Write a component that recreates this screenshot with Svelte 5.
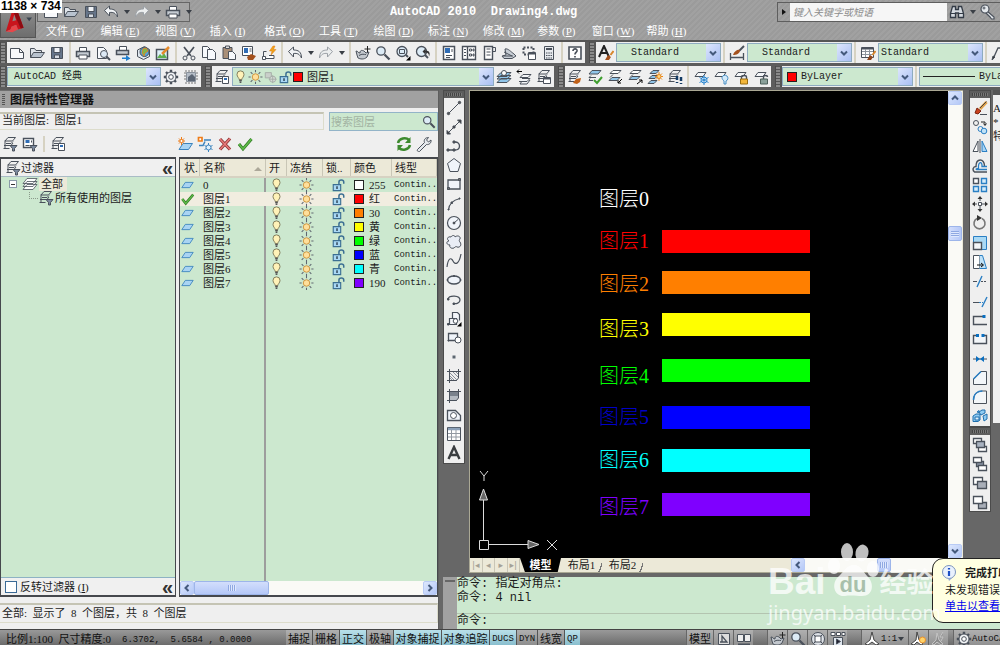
<script>
  // 16x16 图标
  const stack = '<path d="M6 1.500h7.500l-3 3.500H3zM4 7.500h5l2-2M2 9.500h7l2-2.500M1.500 12.500h6M3 4.500v8" />';
  const sheet = (x, y, w = 7, h = 9) => `<path fill="#f7f9fc" d="M${x} ${y}h${w - 3}l3 3v${h - 3}h-${w}z" />`;
  const slab = '<path d="M5 3.500h8l-3 4H2z" fill="#f4f6f8" />';
  const gearPath = '<path d="M8 .8v14.400M.8 8h14.400M3 3l10 10M13 3L3 13" stroke-width="2.400" /><circle cx="8" cy="8" r="5" fill="#f2f4f6" /><circle cx="8" cy="8" r="2.300" fill="#fff" />';
  const funnel = '<path d="M8 9.500h7l-2.500 3V15h-2v-2.500z" fill="#7d8ba0" />';
  const frame = '<path d="M3.500 1v14M1 3.500h14M1 12.500h9M12.500 1v9L10 13" />';

  const icons = {
    new: '<path d="M1.500 3.500h9l4 4v6h-13z" fill="#f8f9fb" /><path d="M10.500 3.500v4h4" />',
    open: '<path d="M1.500 12.500v-9h4l1.500 2h5.500v2" fill="#dfe4ea" /><path d="M1.500 12.500l3-5h11l-3.500 5z" fill="#b9c3cf" />',
    save: '<path d="M2.500 2.500h11v11h-11z" fill="#66758a" /><path d="M5 2.500h6v5H5z" fill="#f0f3f7" /><path d="M5.500 10h5v3.500h-5z" fill="#d8dde4" />',
    print: '<path d="M4.500 7V2.500h7V7" fill="#fff" /><path d="M1.500 6.500h13v5h-13z" fill="#c5cbd2" stroke-width="1.500" /><path d="M4 10h8v4H4z" fill="#fff" />',
    preview: sheet(2.5, 2.5, 9, 11) + '<circle cx="9" cy="9" r="3.500" fill="#dce9f5" /><path d="M11.500 11.500L15 15" stroke-width="2" />',
    publish: '<path d="M4.500 6V1.500h7V6" fill="#fff" /><path d="M1.500 5.500h12v4h-12z" fill="#c5cbd2" stroke-width="1.500" /><path d="M7 12.500h4V10l4.500 3.500-4.500 2.500v-2H7z" fill="#1f7fd0" stroke="none" />',
    globe: '<path d="M2.500 5l7-3.500 5 3v7l-6 3-6-3z" fill="#dfe7ef" /><circle cx="9.500" cy="7" r="4.500" fill="#54a6dc" /><path d="M8 4l3-1 2 3-3 2-1 3-2-3z" fill="#7dba4b" stroke="#d8862c" />',
    edit: '<path d="M1.500 4.500h11v10h-11z" fill="#dff0fa" stroke-width="1.500" /><path d="M2 13l3-4 2 2 2-3 3 5z" fill="#5fae4e" stroke="none" /><path d="M14 2L7 9" stroke="#e58a2a" stroke-width="2.500" />',
    cut: '<path d="M3 2l7 9M13 2L6 11" stroke-width="1.700" /><circle cx="4" cy="13" r="2" /><circle cx="12" cy="13" r="2" />',
    copy: sheet(1.5, 1.5, 8, 11) + sheet(6.5, 4.5, 8, 10),
    paste: '<path d="M2 2.500h9v11H2z" fill="#a98f78" /><path d="M4.500 1h4v2.500h-4z" fill="#ddd" />' + sheet(7.5, 6.5, 7, 8),
    match: '<path d="M1.500 1.500h10v9h-10z" fill="#fff" /><path d="M3 3h4v5H3z" fill="#2f6cb5" stroke="none" /><path d="M8.500 4h2M8.500 6h2" /><path d="M6 12l4-3 5 2-3 4H7z" fill="#a4501c" stroke="none" />',
    block: '<path d="M5.500 6.500h-3v5M9 11.500h3" /><path d="M1.500 11.500h3v3h-3zM8 10.500h5v3H4.500" fill="#fff" /><path d="M12 1L8.500 6H11l-1 4 5-5.500h-2.500L14 1z" fill="#f0a21c" stroke="#e07d10" stroke-width=".5" />',
    undo: '<path d="M1.500 6.500L6.500 2v3c5 0 8 2 8 8-2-4-4-5-8-4.500V12z" fill="#f2f4f6" />',
    redo: '<path d="M14.500 6.500L9.500 2v3c-5 0-8 2-8 8 2-4 4-5 8-4.500V12z" fill="#eceeef" stroke="#9ba0a6" />',
    pan: '<path d="M1 6c2 0 2 2 4 2 0-3 2-3 4-2l2 2 3-1-2 5c-3 3-7 2-9 1l-1-3z" fill="#c2c7cd" /><path d="M4 10.500c3-2 5-1 7-1" /><path d="M12.500 1v6M9.500 4h6" stroke="#222" />',
    zoom: '<circle cx="6" cy="6" r="4.200" fill="#dcebf6" stroke-width="1.300" /><path d="M9.500 9.500L14.500 14.500" stroke-width="2.300" />',
    zoomwin: '<circle cx="7" cy="6.500" r="5" fill="#dcebf6" stroke-width="1.300" /><path d="M4.500 4.500h5v4h-5z" /><path d="M11 10l2 2" stroke-width="2" /><path d="M15.500 11v4.500H11z" fill="#000" stroke="none" />',
    zoomprev: '<circle cx="6.500" cy="6.500" r="5" fill="#dcebf6" stroke-width="1.300" /><path d="M10 10l3 3" stroke-width="2" /><path d="M7.500 6.500l3-3v2c4 0 5 3 3.500 6 0-3-1-4-3.500-4v2z" fill="#333" stroke="none" />',
    props: '<path d="M2.500 1.500h11v13h-11z" fill="#fff" stroke-width="1.500" /><path d="M4 3h5v5H4z" fill="#2f6cb5" stroke="none" /><path d="M11 4v3M5 10.500h6M5 12.500h4" />',
    design: '<path d="M1.500 1.500h13v13h-13zM6.500 2v12" fill="#fff" stroke-width="1.400" /><path d="M3 4.500h2M3 7.500h2M3 10.500h2M8.500 4h2v2h-2zM12 4h1v2h-1zM8.500 9h2v2h-2zM12 9h1v2h-1z" />',
    palette: '<path d="M3.500 1.500h8v13h-8z" fill="#fff" stroke-width="1.400" /><path d="M11.500 2.500h3v4h-3M5.500 4h4M5.500 7h4M5.500 10h4" />',
    markup: '<path d="M4 4c3-1 6 3 9 5l2 2-4 2.500H3L1 11l4-1z" fill="#c8ced5" /><path d="M3 7l8 4M2 11h10" />',
    sheets: '<path d="M2.500 2.500h10v7h-10z" stroke-dasharray="2 1.500" stroke-width="2" /><path d="M7.500 7.500h7v7h-7z" fill="#fff" /><path d="M8 8.500h6" stroke-width="2" />',
    calc: '<path d="M3.500 1.500h9v13h-9z" fill="#e7eaee" /><path d="M5 4h6" stroke-width="2" /><path d="M5 8h6M5 10.500h6M5 13h6" stroke-dasharray="1.500 .8" />',
    help: '<path d="M2 2h12v12H2z" fill="#fff" stroke-width="1.600" /><path d="M6 6c0-3 4.500-2.500 4 0-.5 1.500-2 1.500-2 3.500M8 11v1.500" stroke-width="1.700" />',
    textstyle: '<path d="M1 12L6 1l5 11M3 8h6" stroke="#222" stroke-width="2" /><path d="M15.500 6l-3 4" stroke="#d8862c" stroke-width="2" /><path d="M7 15l3-5 3 2-2 3z" fill="#a4501c" stroke="none" />',
    dimstyle: '<path d="M1.500 8v7M14.500 8v7M2 12.500h12" stroke-width="1.300" /><path d="M15 1l-5 5" stroke-width="2" /><path d="M4 10c1-4 5-6 7-5 0 4-4 5-7 5z" fill="#a4501c" stroke="none" />',
    tablestyle: '<path d="M1.500 2.500h12v10h-12z" fill="#fff" /><path d="M2 3.500h11" stroke-width="2" /><path d="M2 6.500h11M2 9.500h11M5.500 4v8M9.500 4v8" stroke="#8d949c" /><path d="M15.500 6l-3 4" stroke="#d8862c" stroke-width="2" /><path d="M7 15l3-5 3 2-2 3z" fill="#8e431a" stroke="none" />',
    leader: '<path d="M2 14L7 3h6" stroke-width="1.300" /><path d="M1 15l1-4 2 1z" fill="#333" /><path d="M9 12l4-6 2 3-3 5z" fill="#a4501c" stroke="none" />',
    gear: gearPath,
    wsave: '<path d="M3.500 3.500h9v9h-9z" fill="#b4bcc6" stroke="#8a929c" /><path d="M3 1v2M6 1v2M9 1v2M12 1v2M3 13v2M6 13v2M9 13v2M12 13v2M1 4h2M1 7h2M1 10h2M13 4h2M13 7h2M13 10h2" stroke="#777" /><path d="M5 12V8l4-3 3 3v4z" fill="#5b6573" stroke="none" />',
    layers: stack + '<path d="M8.500 7.500h6v7h-6z" fill="#fff" /><path d="M10 9h3v2h-3z" fill="#2f6cb5" stroke="none" />',
    layercur: '<path d="M5 6.500h10l-4 3.500H1zM5 9.500h10l-4 4H1zM5 3.500h10l-4 4H1z" fill="#8fc4e8" /><circle cx="8" cy="4" r="2.500" fill="#fff" />',
    layerprev: '<path d="M7 5.500h8l-3 3H4zM6 9.500h8l-3 3H3M6 12l-2 3h7l3-4" fill="#f4f6f8" /><path d="M1 2.500h5M3 .5l-2 2 2 2" stroke="#000" />',
    layerstate: stack + '<path d="M7.500 8.500h7v6h-7z" fill="#fff" /><path d="M8 9.500h6" stroke-width="2" />',
    lbrush: stack + '<path d="M6 14l3-4 5-1-1 4-3 2z" fill="#c06018" stroke="none" />',
    lcheck: '<path d="M5 1.500h9l-3 3.500H2z" fill="#8fc4e8" /><path d="M4 6.500L2 8.500h7M3 9.500l-1 2h4" /><path d="M7 11l3 3 5-6" stroke="#3f9f2f" stroke-width="2" />',
    lblue: '<path d="M6 1.500h8l-3 3H3zM6 5.500L3 8.500" fill="#fff" /><path d="M5 8.500h8l-3 3H2z" fill="#8fc4e8" /><path d="M15 10l-4 4m0-3v3h3" stroke="#000" />',
    lblue2: '<path d="M6 1.500h8l-3 3H3zM6 5.500L3 8.500" fill="#fff" /><path d="M5 7.500h8l-3 3H2z" fill="#8fc4e8" /><path d="M10 15l5-4m-3 0h3v3" stroke="#000" />',
    lsun: '<path d="M6 1.500h6l-3 3H3zM5 6.500h6l-3 3H2zM4 11.500h6l-3 3H1z" fill="#8fc4e8" /><path d="M12 3v9M8 7.500h8M9 4.500l6 6M15 4.500l-6 6" stroke="#e88a20" /><circle cx="12" cy="7.500" r="2" fill="#ffd680" stroke="#e88a20" />',
    lwalk: stack + '<path d="M10 7v4M14 8v4M10 13v1M14 14v1" stroke="#123a63" stroke-width="2.500" />',
    lfreeze: slab + '<circle cx="11" cy="11" r="3" stroke="#2a86d0" fill="#fff" /><path d="M11 6v10M6.500 8.500l9 5M15.500 8.500l-9 5" stroke="#2a86d0" />',
    loff: slab + '<path d="M9 8.500a3 3 0 1 1 4 3.500v3h-2v-3c-1-1-2-2-2-3.500z" fill="#d3eafa" stroke="#4a90c4" />',
    llock: slab + '<path d="M8.500 10V8c0-2 5-2 5 0v2" stroke-width="1.400" /><path d="M7.500 10h7v5h-7z" fill="#f2b63a" stroke="#9b6e12" />',
    lunlock: slab + '<path d="M10.500 10V8c0-2 4-2 4 0" stroke-width="1.400" /><path d="M7.500 10h7v5h-7z" fill="#8aa09a" stroke="#4f625c" />',
    bulb: '<path d="M6.500 11c0-2-2.500-3-2.500-6a4 4 0 0 1 8 0c0 3-2.500 4-2.500 6z" fill="#fff2b8" stroke="#77704f" /><path d="M6.500 12h3M7 14h2" stroke="#555" stroke-width="1.600" />',
    sun: '<path d="M8 0v2.500M8 13.500V16M0 8h2.500M13.500 8H16M2.500 2.500l2 2M11.500 11.500l2 2M13.500 2.500l-2 2M4.500 11.500l-2 2" stroke="#5f6670" stroke-width="1.200" /><circle cx="8" cy="8" r="3.700" fill="#ffdf9a" stroke="#c98d35" />',
    vpfreeze: '<path d="M2 3h7v6H2z" fill="#c9cfca" stroke="#a4aaa5" /><circle cx="10.500" cy="10.500" r="3.500" fill="#d5dbd6" stroke="#a4aaa5" /><path d="M10.500 6v9M6 10.500h9" stroke="#a4aaa5" />',
    unlock: '<path d="M8.500 8V4.500c0-3 5.500-3 5.500 0v2" stroke="#3c6f93" stroke-width="1.700" /><path d="M2 7.500h8.500v7H2z" fill="#a9d8f5" stroke="#3c6f93" stroke-width="1.300" /><path d="M6.300 9.500v3" stroke="#234" stroke-width="1.500" />',
    sheet: '<path d="M5.500 5h9l-4 6h-9z" fill="#a9d4f3" stroke="#3b83bd" />',
    tick: '<path d="M2 8l4 5 8.500-10" stroke="#2f7a22" stroke-width="3" /><path d="M2 8l4 5 8.500-10" stroke="#5fbb4a" stroke-width="1.500" />',
    cross: '<path d="M3 3l10 10.500M13 2.500L3 13.500" stroke="#8f3333" stroke-width="3.200" /><path d="M3 3l10 10.500M13 2.500L3 13.500" stroke="#e87b7b" stroke-width="1.500" />',
    newlayer: '<path d="M6 7.500h9.500l-4 6H2z" fill="#a9d4f3" stroke="#3b83bd" /><path d="M4.500 1v8M1 5h7M2 2.500l5 5M7 2.500l-5 5" stroke="#ee7d1a" /><circle cx="4.500" cy="5" r="1.600" fill="#fff" stroke="#ee7d1a" />',
    newvp: '<path d="M1.500 1.500h3.500v3.500H1.500z" fill="#fff" stroke="#ee7d1a" stroke-width="1.700" /><path d="M7 4h7M8 5.500L6 9.500H2" stroke="#3b83bd" stroke-width="1.500" /><path d="M11.500 7v9M7.500 9.500l8 4M15.500 9.500l-8 4" stroke="#3b83bd" /><circle cx="11.500" cy="11.500" r="2.500" fill="#dff0fc" stroke="#3b83bd" />',
    refresh: '<path d="M2 7c1-5 8-6 11-3M14 9c-1 5-8 6-11 3" stroke="#3d8a2e" stroke-width="2.500" /><path d="M14.500 1v6H9zM1.500 15V9H7z" fill="#3d8a2e" stroke="none" />',
    wrench: '<path d="M1.500 13.500l7-7c-1-3 1-5 4-5L10.500 4l2 2 2.500-2c.5 3-2 5-4.500 4.500l-7 7c-1 1-3-1-2-2z" fill="#e5e8ec" />',
    filter: stack + funnel,
    pfilter: '<path d="M1.500 2.500h10v9h-10z" fill="#fff" stroke-width="1.400" /><path d="M3.500 4h4v3h-4z" fill="#2f6cb5" stroke="none" /><path d="M3.500 9.500h4M9.500 4.500v2" />' + funnel,
    leaves: '<path d="M5 8.500h10l-4 5H1zM5 5.500h10l-4 5H1zM5 2.500h10l-4 5H1z" fill="#fff" stroke-width=".8" />',
    binocs: '<path d="M3.500 2.500h3v3h3v-3h3l2 7v4H9.500V9h-3v4.500h-5v-4z" fill="#d5dae0" stroke="#333b46" stroke-width="1.300" /><path d="M2 9.500h4M10 9.500h4" stroke="#333b46" />',
    key: '<path d="M7 7l7 6v2h-2.500L10 13l-1-1-4-4" fill="#e4e8ec" stroke-width="1.200" /><circle cx="5" cy="5" r="4" fill="#e4e8ec" stroke-width="1.200" /><circle cx="4" cy="4" r="1" />',
    // 绘图
    line: '<path d="M2.500 13.500l11-11" /><circle cx="2.500" cy="13.500" r="1.200" fill="#555" /><circle cx="13.500" cy="2.500" r="1.200" fill="#555" />',
    xline: '<path d="M2 14L14 2" /><path d="M1 11.500v3.500h3.500zM11.500 1H15v3.500zM7 7h2v2H7z" fill="#333" />',
    pline: '<path d="M2 12h7c6 0 6-8 0-8" stroke-width="1.300" /><path d="M1 11h2v2H1zM7 11h2v2H7zM7 3h2v2H7z" fill="#555" />',
    polygon: '<path d="M8 1.500l6.500 5-2.500 8H4l-2.500-8z" fill="#f0f4fa" />',
    rect: '<path d="M2 4h12v9H2z" fill="#f0f4fa" stroke-width="1.300" /><path d="M12.500 2.500h2v2h-2zM1.500 11.500h2v2h-2z" fill="#777" />',
    arc: '<path d="M2.500 14C3 8 7 4 14 2.500" stroke-width="1.200" /><path d="M2 13h1v1H2zM5 6h1.500v1.500H5zM13 2h1v1h-1z" fill="#444" />',
    circle: '<circle cx="8" cy="8" r="6.500" fill="#f0f4fa" stroke-width="1.200" /><path d="M8 8l4-3.500" /><circle cx="8" cy="8" r="1" fill="#333" />',
    cloud: '<path d="M5 3c1-2 4-2 4 0 2-2 6-1 5 2-1 1-1 2 0 3 2 3 0 6-3 5-1-1-2 0-3 1-3 1-5-1-4-3-4 0-4-4-1-4-3-2-1-5 2-4z" fill="#e9edf5" />',
    spline: '<path d="M1 14C2 5 5 4 7 8s6 4 8-7" stroke-width="1.200" />',
    ellipse: '<ellipse cx="8" cy="8" rx="6.500" ry="4" fill="#f0f4fa" stroke-width="1.300" /><path d="M1 7.500h1v1H1zM14 7.500h1v1h-1zM7.500 3.500h1v1h-1z" fill="#333" />',
    earc: '<path d="M2 7c1-4 12-4 12 1 0 3-4 4-6 3.500" stroke-width="1.300" /><path d="M7 11h1.500v1.500H7zM1.500 6.500H3V8H1.500z" fill="#444" />',
    insert: '<path d="M6.500 8V1.500h5l2 2v6M3.500 7.500h7v6h-7z" fill="#f4f6fa" stroke-width="1.200" /><circle cx="9.500" cy="10" r="2.300" fill="#fff" /><path d="M1.500 12.500h1.500v1.500H1.500z" fill="#333" /><path d="M15.500 11v4.500H11z" fill="#000" stroke="none" />',
    mblock: '<path d="M2.500 3.500h9v7h-9z" fill="#f0f4fa" stroke-width="1.300" /><path d="M2 10h1v1H2z" fill="#333" /><circle cx="12" cy="10" r="3" fill="#fff" />',
    point: '<path d="M6.500 6.500h3v3h-3z" fill="#5c6670" stroke="none" />',
    hatch: frame + '<path d="M4 5l7 7M4 8l4 4M7 4l5 5M10 4l2 2M4 10l2 2" stroke="#8b939c" />',
    grad: '<path d="M4 4h8v6l-2 2H4z" fill="#7a828c" stroke="none" /><path d="M4 8h8v2l-2 2H4z" fill="#b5bbc2" stroke="none" />' + frame,
    region: '<path d="M1.500 3.500h8l5 5v5h-13z" fill="#f0f4fa" stroke-width="1.300" /><circle cx="7.500" cy="8.500" r="3" fill="#fff" />',
    table: '<path d="M1.500 1.500h13v13h-13z" fill="#fff" /><path d="M2 3h12" stroke-width="2.500" stroke="#8ba0b8" /><path d="M2 7.500h12M2 11h12M5.500 4v10M10 4v10" stroke="#9299a2" />',
    mtext: '<path d="M2.500 14L8 2 13.500 14M4.500 10h7" stroke="#3a3d40" stroke-width="2.400" />',
    // 修改
    erase: '<path d="M14.500 2L8 9" stroke="#e0a24a" stroke-width="3" /><path d="M14.500 1.500L8 8" stroke="#444" /><path d="M3 13l2-5 4 3-3 3z" fill="#c9401c" stroke="#7c2410" /><path d="M8 14.500h7" />',
    mcopy: '<circle cx="4" cy="4" r="2.500" /><path d="M9 3h4v3M11.500 4.500L13 6.500l1.500-2" stroke="#222" /><circle cx="8.500" cy="10" r="2.500" stroke="#2a7fc4" /><circle cx="12" cy="12" r="2.800" fill="#bfe1f7" stroke="#2a7fc4" />',
    mirror: '<path d="M6 3v10.500H1z" fill="#fff" /><path d="M8 1v14" /><path d="M10 3v10.500h5z" fill="#a9d4f3" stroke="#2a7fc4" />',
    offset: '<path d="M15 14H2.500C0 12 1 8.500 4 8.500 4 0 12.500 0 12.500 8" stroke-width="1.400" /><path d="M15 11.500H4.500c-1-.5 0-1 2-1C6 3 10.500 3 10 8.500h5" stroke="#2a7fc4" stroke-width="1.300" />',
    array: '<path d="M1.500 1.500h5v5h-5z" fill="#fff" stroke-width="1.400" /><path d="M9.500 1.500h5v5h-5zM1.500 9.500h5v5h-5zM9.500 9.500h5v5h-5z" fill="#d5ecfb" stroke="#2a7fc4" stroke-width="1.400" />',
    move: '<path d="M8 2v12M2 8h12" stroke-dasharray="3 1" /><path d="M8 0l2.500 3h-5zM8 16l2.500-3h-5zM0 8l3-2.500v5zM16 8l-3-2.500v5z" fill="#333" stroke="none" /><path d="M6.500 6.500h3v3h-3z" fill="#fff" />',
    rotate: '<path d="M10 3.500A5.500 5.500 0 1 1 5 3.500" stroke-width="1.600" stroke="#777" /><path d="M5 0l5 3-5 3z" fill="#333" stroke="none" />',
    scale: '<path d="M1.500 1.500h13v13h-13z" fill="#a9d9f5" stroke="#2a7fc4" /><path d="M1.500 7.500h8v7h-8z" fill="#f3f6f9" stroke-width="1.400" />',
    stretch: '<path d="M1.500 1.500h6v13h-6z" fill="#fff" /><path d="M7.500 1.500h3l4 13h-7" fill="#bfe1f7" stroke="#2a7fc4" /><path d="M5 11h6M9 9l2.500 2L9 13" stroke="#111" />',
    trim: '<path d="M1 8.500h4" /><path d="M5 14l5-11M7 8.500h1" stroke="#2a7fc4" stroke-width="1.400" /><path d="M9 8.500h6" stroke-dasharray="2 1" />',
    extend: '<path d="M1 9.500h6" /><path d="M7 9.500h4" stroke="#2a7fc4" stroke-dasharray="2 1" /><path d="M10 14l5-10" stroke="#2a7fc4" stroke-width="1.400" />',
    breakpt: '<path d="M15 12.500H1.500v-8H11" stroke-width="1.400" /><path d="M10.500 3h3v3h-3z" fill="#0a6fc0" stroke="none" />',
    brk: '<path d="M4 4.500H1.500v8h13v-8H12" fill="#f3f6f9" stroke-width="1.400" /><path d="M4 3h3v3H4zM9.500 3h3v3h-3z" fill="#0a6fc0" stroke="none" />',
    join: '<path d="M1 8h14" /><path d="M4 5l4 3-4 3zM12 5L8 8l4 3z" fill="#0a6fc0" stroke="none" />',
    chamfer: '<path d="M1.500 14.500V9L9 1.500h5.500v13z" fill="#f3f6f9" /><path d="M1.500 9L9 1.500" stroke="#2a7fc4" stroke-width="1.500" />',
    fillet: '<path d="M1.500 14.500V11c0-6 4-9 9-9h4v12.500z" fill="#f3f6f9" /><path d="M1.500 11c0-6 4-9 9-9" stroke="#2a7fc4" stroke-width="1.500" />',
    explode: '<path d="M1 8l3-2h4v6l-2 1.500H1zM7 4l3-2h3v3L9 7zM11 8l4-2v5l-3 2zM5 4l2-1.500v2z" fill="#8fcbf2" stroke="#1f6fae" /><path d="M3 9h4v3H3z" fill="#dff0fc" stroke="#1f6fae" />',
    front: '<path d="M1.500 1.500h8v5h-8zM6.500 9.500h8v5h-8z" fill="#fff" stroke-width="1.300" /><path d="M4.500 4.500h8v6h-8z" fill="#a8b2c0" stroke-width="1.300" />',
    back: '<path d="M4.500 5.500h7v5h-7z" fill="#8a94a4" stroke-width="1.300" /><path d="M1.500 1.500h8v5h-8zM6.500 9.500h8v5h-8z" fill="#fff" stroke-width="1.300" />',
    above: '<path d="M1.500 2.500h9v7h-9z" fill="#fff" stroke-width="1.300" /><path d="M5.500 6.500h9v7h-9z" fill="#a8aeb8" stroke-width="1.300" />',
    under: '<path d="M6.500 8.500h8v6h-8z" fill="#a8aeb8" stroke-width="1.300" /><path d="M1.500 2.500h9v7h-9z" fill="#fff" stroke-width="1.300" />',
    // 状态栏
    paper: '<path d="M2.500 2.500h11v11h-11z" fill="#ddd" /><path d="M6 5v6h5zM4 11h2" stroke-width="1.300" />',
    views: '<path d="M1.500 3.500h6v7h-6zM8.500 3.500h6v7h-6z" fill="#eee" /><path d="M2 13.500h12" stroke-width="2" />',
    wheel: '<circle cx="8" cy="8" r="6.500" fill="#dfe3e8" /><path d="M5 5h6v6H5z" fill="#fff" /><path d="M3.500 3.500l2 2M12.500 3.500l-2 2M3.500 12.500l2-2M12.500 12.500l-2-2" />',
    motion: '<path d="M1 1.500h4v3H1zM6.500 1.500h4v3h-4zM12 1.500h3v3h-3z" fill="#fff" /><path d="M3.500 6.500h9v8h-9z" fill="#dfe6ee" /><path d="M6.500 8l4 2.500-4 2.500z" fill="#223" />',
    anno: '<path d="M8 1l2 8 5 4-3 1-4-3-4 3-3-1 5-4z" fill="#fff" stroke="#444" />',
    anno2: '<path d="M6 1l2 8 4 4-2 1-4-3-3 3-3-1 5-4z" fill="#fff" stroke="#444" /><circle cx="11.500" cy="9" r="3" fill="#ffd36a" stroke="#e8912a" />',
    anno3: '<path d="M6 2l2 7 4 4-2 1-4-3-3 3-2-1 4-4zM12 1L9 6h3l-2 4" stroke="#c4c4c4" fill="#8b8b8b" />'
  };

  const standardTools = [
    'new', 'open', 'save', '|', 'print', 'preview', 'publish', 'globe', 'edit', '|',
    'cut', 'copy', 'paste', 'match', 'block', '|', 'undo', 'v', 'redo', 'v', '|',
    'pan', 'zoom', 'zoomwin', 'zoomprev', '|',
    'props', 'design', 'palette', 'markup', 'sheets', 'calc', '|', 'help'
  ];
  const layerTools = ['lbrush', 'lcheck', 'lblue', 'lblue2', 'lsun', 'lwalk', '|', 'lfreeze', 'loff', 'llock', 'lunlock'];
  const drawTools = [
    'line', 'xline', 'pline', 'polygon', 'rect', 'arc', 'circle', 'cloud', 'spline', 'ellipse',
    'earc', 'insert', 'mblock', 'point', 'hatch', 'grad', 'region', 'table', 'mtext'
  ];
  const modifyTools = [
    'erase', 'mcopy', 'mirror', 'offset', 'array', 'move', 'rotate', 'scale', 'stretch', 'trim',
    'extend', 'breakpt', 'brk', 'join', 'chamfer', 'fillet', 'explode'
  ];
  const orderTools = ['front', 'back', 'above', 'under'];

  const menus = [
    ['文件', 'F'], ['编辑', 'E'], ['视图', 'V'], ['插入', 'I'], ['格式', 'O'], ['工具', 'T'],
    ['绘图', 'D'], ['标注', 'N'], ['修改', 'M'], ['参数', 'P'], ['窗口', 'W'], ['帮助', 'H']
  ];

  // y: 文字基线, bar: 色条 [顶部, 高度]
  const layers = [
    { name: '0', color: '#ffffff', label: '255', y: 115 },
    { name: '图层1', color: '#ff0000', label: '红', y: 157, bar: [139, 23] },
    { name: '图层2', color: '#ff7f00', label: '30', y: 200, bar: [180, 23] },
    { name: '图层3', color: '#ffff00', label: '黄', y: 245, bar: [222, 23] },
    { name: '图层4', color: '#00ff00', label: '绿', y: 292, bar: [268, 23] },
    { name: '图层5', color: '#0000ff', label: '蓝', y: 333, bar: [315, 23], ink: '#0000c8' },
    { name: '图层6', color: '#00ffff', label: '青', y: 376, bar: [358, 23] },
    { name: '图层7', color: '#7f00ff', label: '190', y: 423, bar: [402, 23] }
  ];
  const current = 1;

  let toggles = $state([
    { t: '捕捉', on: false }, { t: '栅格', on: false }, { t: '正交', on: true },
    { t: '极轴', on: false }, { t: '对象捕捉', on: true }, { t: '对象追踪', on: true },
    { t: 'DUCS', on: true, en: true }, { t: 'DYN', on: false, en: true },
    { t: '线宽', on: false }, { t: 'QP', on: true, en: true }
  ]);
  let invert = $state(false);
  let search = $state('');
  let command = $state('');
</script>

{#snippet icon(name)}
  <svg class="ico" viewBox="0 0 16 16" fill="none" stroke="#4a515b" aria-hidden="true">{@html icons[name]}</svg>
{/snippet}

{#snippet tool(name)}
  {#if name === '|'}
    <span class="sep"></span>
  {:else if name === 'v'}
    <button class="drop" type="button" aria-label="展开"><span class="tri"></span></button>
  {:else}
    <button class="tool" type="button" aria-label={name}>{@render icon(name)}</button>
  {/if}
{/snippet}

{#snippet chevron(dir)}
  <svg class="chev {dir}" viewBox="0 0 10 10" aria-hidden="true"><path d="M2 3.500l3 3 3-3" fill="none" stroke="#44597c" stroke-width="2" /></svg>
{/snippet}

{#snippet combo(label, value, cls)}
  <span class="combo {cls}">
    <select aria-label={label}><option>{value}</option></select>
    <span class="arrow">{@render chevron('down')}</span>
  </span>
{/snippet}

<div class="app">
  <header class="title">
    <div class="title-row">
      <div class="quick">
        {#each ['new', 'open', 'save', 'undo', 'v', 'redo', 'v', 'print', 'v'] as t}
          {@render tool(t)}
        {/each}
      </div>
      <h1>AutoCAD 2010&nbsp; Drawing4.dwg</h1>
      <div class="info">
        <span class="play"></span>
        <input type="text" aria-label="搜索" placeholder="键入关键字或短语" />
        {@render tool('binocs')}
        {@render tool('v')}
        {@render tool('key')}
      </div>
    </div>
    <nav class="menus">
      {#each menus as [name, key]}
        <button type="button">{name} (<u>{key}</u>)</button>
      {/each}
    </nav>
    <button class="logo" type="button" aria-label="应用程序菜单">
      <svg viewBox="0 0 36 30" aria-hidden="true">
        <path d="M5 24L12 1l5 0 7 19-6 2-2-5-5 2-1 3z" fill="#c9141c" />
        <path d="M12 1l5 0 7 19-3 1z" fill="#8d0b12" />
        <path d="M12 13l2-7 2 6z" fill="#8a8a8a" />
        <path d="M5 24l5-2 1-3 5-2 2 5-6 3z" fill="#e7464a" />
        <path d="M27 9h6l-3 4z" fill="#3a4450" />
      </svg>
    </button>
    <span class="dims">1138 × 734</span>
  </header>

  <div class="rows">
    <div class="bar">
      <div class="strip">
        <span class="grip"></span>
        {#each standardTools as t}{@render tool(t)}{/each}
      </div>
      <div class="strip grow">
        <span class="grip"></span>
        {@render tool('textstyle')}
        {@render combo('文字样式', 'Standard', 'std')}
        <span class="sep"></span>
        {@render tool('dimstyle')}
        {@render combo('标注样式', 'Standard', 'std')}
        <span class="sep"></span>
        {@render tool('tablestyle')}
        {@render combo('表格样式', 'Standard', 'std near')}
        <span class="sep"></span>
        {@render tool('leader')}
      </div>
    </div>
    <div class="bar">
      <div class="strip">
        <span class="grip"></span>
        {@render combo('工作空间', 'AutoCAD 经典', 'space')}
        {@render tool('gear')}
        {@render tool('wsave')}
      </div>
      <div class="strip">
        <span class="grip"></span>
        {@render tool('layers')}
        <span class="combo layer">
          {@render icon('bulb')}{@render icon('sun')}{@render icon('vpfreeze')}{@render icon('unlock')}
          <span class="chip" style="background:{layers[current].color}"></span>
          <select aria-label="图层">
            {#each layers as l, i}<option selected={i === current}>{l.name}</option>{/each}
          </select>
          <span class="arrow">{@render chevron('down')}</span>
        </span>
        {@render tool('layercur')}{@render tool('layerprev')}{@render tool('layerstate')}
      </div>
      <div class="strip">
        <span class="grip"></span>
        {#each layerTools as t}{@render tool(t)}{/each}
      </div>
      <div class="strip grow">
        <span class="grip"></span>
        <span class="combo bylayer">
          <span class="chip" style="background:#ff0000"></span>
          <select aria-label="颜色"><option>ByLayer</option></select>
          <span class="arrow">{@render chevron('down')}</span>
        </span>
        <span class="sep"></span>
        <span class="combo ltype">
          <span class="rule"></span>
          <select aria-label="线型"><option>ByLayer</option></select>
        </span>
      </div>
    </div>
  </div>

  <main>
    <section class="manager">
      <h2><span class="vgrip"></span>图层特性管理器</h2>
      <div class="now">
        <p class="sunken">当前图层: &nbsp;图层1</p>
        <label class="find">
          <input type="text" aria-label="搜索图层" placeholder="搜索图层" bind:value={search} />
          {@render icon('zoom')}
        </label>
      </div>
      <div class="tools">
        <div class="tools-l">
          {@render tool('filter')}{@render tool('pfilter')}<span class="sep"></span>{@render tool('layers')}
        </div>
        <div class="tools-m">
          {@render tool('newlayer')}{@render tool('newvp')}{@render tool('cross')}{@render tool('tick')}
        </div>
        {@render tool('refresh')}{@render tool('wrench')}
      </div>

      <div class="split">
        <div class="tree">
          <div class="tree-head">{@render icon('filter')}过滤器<button type="button" class="fold" aria-label="折叠">«</button></div>
          <ul>
            <li><span class="minus"></span>{@render icon('leaves')}<span class="picked">全部</span></li>
            <li class="child"><span class="twig"></span>{@render icon('filter')}所有使用的图层</li>
          </ul>
          <div class="tree-foot">
            <label><input type="checkbox" bind:checked={invert} />反转过滤器 (<u>I</u>)</label>
            <button type="button" class="fold" aria-label="折叠">«</button>
          </div>
        </div>

        <div class="list">
          <div class="list-body">
            <table>
              <colgroup>
                <col class="c-st" /><col class="c-nm" /><col class="c-on" /><col class="c-fr" />
                <col class="c-lk" /><col class="c-co" /><col />
              </colgroup>
              <thead>
                <tr>
                  <th>状.</th><th>名称<span class="sort"></span></th><th>开</th><th>冻结</th>
                  <th>锁..</th><th>颜色</th><th>线型</th>
                </tr>
              </thead>
              <tbody>
                {#each layers as l, i}
                  <tr class:current={i === current}>
                    <td>{@render icon(i === current ? 'tick' : 'sheet')}</td>
                    <td>{l.name}</td>
                    <td>{@render icon('bulb')}</td>
                    <td class="mid">{@render icon('sun')}</td>
                    <td class="mid">{@render icon('unlock')}</td>
                    <td><span class="chip" style="background:{l.color}"></span>{l.label}</td>
                    <td class="en">Contin..</td>
                  </tr>
                {/each}
              </tbody>
            </table>
          </div>
          <div class="hscroll">
            <button type="button" class="sb" aria-label="向左">{@render chevron('left')}</button>
            <span class="thumb"><i></i></span>
            <span class="fill"></span>
            <button type="button" class="sb" aria-label="向右">{@render chevron('right')}</button>
          </div>
        </div>
      </div>
      <p class="sunken total">全部: &nbsp;显示了 &nbsp;8 &nbsp;个图层，共 &nbsp;8 &nbsp;个图层</p>
    </section>

    <div class="work">
      <div class="upper">
        <div class="dock draw">
          <span class="hgrip"></span>
          {#each drawTools as t}{@render tool(t)}{/each}
        </div>

        <div class="view">
          <div class="model">
            <svg class="drawing" aria-label="图层颜色">
              {#each layers as l, i}
                <text x="129" y={l.y} fill={l.ink ?? l.color}>{i ? l.name : '图层0'}</text>
                {#if l.bar}<rect x="192" y={l.bar[0]} width="148" height={l.bar[1]} fill={l.color} />{/if}
              {/each}
              <g fill="none" stroke="#dcdcdc">
                <path d="M9.500 449.500h9v9h-9zM13.500 449v-48M19 453.500h39" />
                <path d="M13.500 398l-4 11h8zM69 453.500l-11-4v8z" fill="#666" />
                <path d="M10 380l4 5 4-5M14 385v5M77 449l10 10M87 449l-10 10" />
              </g>
            </svg>
            <div class="vscroll">
              <button type="button" class="sb" aria-label="向上">{@render chevron('up')}</button>
              <span class="fill"></span>
              <span class="thumb"><i></i></span>
              <span class="fill low"></span>
              <button type="button" class="sb" aria-label="向下">{@render chevron('down')}</button>
            </div>
          </div>
          <div class="tabs">
            <div class="nav">
              {#each ['|◂', '◂', '▸', '▸|'] as n}<button type="button">{n}</button>{/each}
            </div>
            <button type="button" class="tab on">模型</button>
            <button type="button" class="tab">布局1</button>
            <button type="button" class="tab">布局2</button>
            <span class="rest"></span>
            <div class="hscroll short">
              <button type="button" class="sb" aria-label="向左">{@render chevron('left')}</button>
              <span class="fill"></span>
              <span class="thumb"><i></i></span>
              <span class="fill"></span>
            </div>
          </div>
        </div>

        <div class="side">
          <div class="dock">
            <span class="hgrip"></span>
            {#each modifyTools as t}{@render tool(t)}{/each}
          </div>
          <div class="dock order">
            <span class="hgrip"></span>
            {#each orderTools as t}{@render tool(t)}{/each}
          </div>
        </div>
        <div class="edge"><span>A</span><span>*</span><span>特</span></div>
      </div>

      <div class="cmd">
        <span class="cmd-grip"></span>
        <div class="cmd-body">
          <p>命令: 指定对角点:</p>
          <p>命令: 4 nil</p>
          <label>命令: <input type="text" bind:value={command} /></label>
        </div>
      </div>
    </div>
  </main>

  <footer>
    <span class="coords">比例1:100&nbsp; 尺寸精度:0</span>
    <span class="xyz en">6.3702,&nbsp; 5.6584 , 0.0000</span>
    <div class="toggles">
      {#each toggles as b}
        <button type="button" class:on={b.on} class:en={b.en} aria-pressed={b.on} onclick={() => (b.on = !b.on)}>{b.t}</button>
      {/each}
    </div>
    <div class="tray">
      <button type="button" class="txt">模型</button>
      {@render tool('paper')}{@render tool('views')}
      <span class="hole"></span>
      {@render tool('pan')}{@render tool('zoom')}{@render tool('wheel')}{@render tool('motion')}
      <span class="hole"></span>
      <button type="button" class="txt scale">{@render icon('anno')}<span class="en">1:1</span><span class="tri"></span></button>
      {@render tool('anno2')}{@render tool('anno3')}
      <span class="hole slim"></span>
      <button type="button" class="txt ws">{@render icon('gear')}<span class="en">AutoCAD</span></button>
    </div>
  </footer>

  <aside class="balloon">
    <h3>
      <svg viewBox="0 0 16 16" aria-hidden="true"><circle cx="8" cy="7" r="6.500" fill="#e9f1fd" stroke="#7b93bd" /><path d="M7 13l1 3 3-3z" fill="#8ea6cf" /><path d="M8 3v1.500M8 6v5" stroke="#1b4fc4" stroke-width="2.200" /></svg>
      完成打印
    </h3>
    <p>未发现错误或</p>
    <a href="#plot">单击以查看打</a>
  </aside>

  <div class="mark" aria-hidden="true">
    <div class="brand">
      <span>Bai</span>
      <svg viewBox="0 0 54 54">
        <g fill="#fff">
          <ellipse cx="8" cy="23" rx="6" ry="8" /><ellipse cx="21" cy="9" rx="6" ry="9" />
          <ellipse cx="36" cy="10" rx="6.500" ry="8.500" transform="rotate(12 36 10)" /><ellipse cx="47" cy="26" rx="6" ry="8" />
          <path d="M28 22c7 0 9 7 14 12 6 6 6 19-6 19-5 0-11-1-17 0-11 1-14-12-7-19 6-5 8-12 16-12z" />
        </g>
        <text x="27" y="49" text-anchor="middle">du</text>
      </svg>
      <span class="jy">经验</span>
    </div>
    <div class="url">jingyan.baidu.com</div>
  </div>
</div>

<style>
  :global(body) { background: #5d5d5d; overflow: hidden; }

  .app {
    --green: #cce8cf; --face: #efefef; --dark: #5d5d5d; --ink: #1b1b1b;
    position: relative; height: 100vh; display: flex; flex-direction: column; overflow: hidden;
    background: var(--dark); color: var(--ink);
    font: 11px/14px "Liberation Serif", "Noto Sans CJK SC", serif;
  }
  .app * { box-sizing: border-box; }
  p, h1, h2, h3, ul { margin: 0; padding: 0; font-size: 11px; font-weight: normal; }
  button, input, select { font: inherit; color: inherit; margin: 0; padding: 0; border: 0; background: none; border-radius: 0; }
  button { cursor: pointer; white-space: nowrap; }
  input, select { min-width: 0; outline: none; }
  .en { font-family: "Liberation Mono", monospace; font-size: 9px; }

  .ico { width: 16px; height: 16px; display: block; flex: none; }
  .tool { width: 20px; height: 20px; flex: none; display: flex; align-items: center; justify-content: center; }
  .drop { width: 11px; flex: none; display: flex; justify-content: center; align-items: center; }
  .tri { border: 3px solid transparent; border-top: 4px solid #3a3f46; border-bottom: 0; }
  .sep { width: 2px; margin: 0 2px; align-self: stretch; flex: none; background: #d6d2c2; }
  .chip { width: 10px; height: 10px; flex: none; border: 1px solid #222; }
  .chev { width: 10px; height: 10px; display: block; }
  .chev.left { transform: rotate(90deg); }
  .chev.right { transform: rotate(-90deg); }
  .chev.up { transform: rotate(180deg); }

  /* 标题 */
  .title {
    position: relative; flex: none; height: 42px; border-bottom: 2px solid #555; color: #fff;
    background: repeating-linear-gradient(135deg, #9b9b9b 0 2px, #a1a1a1 2px 4px);
  }
  .title-row { display: flex; align-items: center; height: 24px; padding-left: 37px; }
  .quick { display: flex; height: 20px; width: 153px; padding-left: 3px; border: 1px solid #666; background: #a4a4a4; align-items: center; }
  .title h1 { flex: 1; text-align: center; font: bold 12px "Liberation Mono", monospace; }
  .info { display: flex; align-items: center; height: 20px; width: 223px; border: 1px solid #5e5e5e; border-right: 0; }
  .info input { width: 157px; height: 18px; background: #f6f6f6; color: #333; padding-left: 3px; font-style: italic; font-size: 10px; }
  .info input::placeholder { color: #8d8d8d; }
  .play { width: 12px; display: flex; justify-content: center; }
  .play::before { content: ""; border: 3px solid transparent; border-left: 4px solid #111; border-right: 0; }
  .menus { display: grid; grid-template-columns: repeat(12, 1fr); width: 655px; margin-left: 46px; }
  .menus button { text-align: left; line-height: 14px; }
  .logo { position: absolute; left: 0; top: 8px; width: 36px; height: 30px; background: linear-gradient(#8f8f8f, #6d6d6d); border: 1px solid #555; border-top: 0; }
  .logo svg { width: 34px; height: 28px; display: block; }
  .dims { position: absolute; left: 0; top: 0; padding: 0 1px; height: 13px; background: #fff; color: #000; font: bold 12px/13px "Liberation Sans", sans-serif; }

  /* 工具栏 */
  .rows { flex: none; display: flex; flex-direction: column; gap: 3px; padding-bottom: 3px; overflow: hidden; }
  .bar { display: flex; gap: 4px; height: 21px; }
  .strip { display: flex; align-items: center; background: var(--face); flex: none; }
  .strip.grow { flex: 1 0 auto; }
  .grip { width: 7px; align-self: stretch; flex: none; background: repeating-linear-gradient(#555 0 1px, #8a8a8a 1px 3px); border-left: 1px solid #4c4c4c; border-right: 2px solid #555; }
  .combo { position: relative; display: flex; align-items: center; height: 19px; background: var(--green); border: 1px solid #8eabc0; flex: none; }
  .combo select { appearance: none; flex: 1; height: 17px; padding: 0 16px 0 14px; }
  .arrow { position: absolute; right: 0; top: 0; bottom: 0; width: 14px; display: flex; align-items: center; justify-content: center; background: linear-gradient(135deg, #dde6fd, #a9bff3); pointer-events: none; }
  .std, .bylayer, .ltype, .space { font-family: "Liberation Mono", "Noto Sans CJK SC", monospace; font-size: 10px; }
  .std { width: 105px; }
  .near select { padding-left: 2px; }
  .space { width: 154px; }
  .space select { padding-left: 6px; }
  .layer { width: 262px; }
  .layer .ico { width: 15px; height: 14px; }
  .layer select, .bylayer select { padding-left: 4px; }
  .bylayer { width: 131px; padding-left: 4px; }
  .ltype { width: 150px; padding-left: 3px; }
  .ltype select { padding-left: 4px; }
  .rule { width: 52px; height: 1px; background: #222; }

  main { flex: 1; min-height: 0; display: grid; grid-template-columns: 439px minmax(0, 1fr); }

  /* 图层管理器 */
  .manager { display: flex; flex-direction: column; min-height: 0; background: var(--face); margin-right: 1px; border-top: 1px solid #6e6e6e; }
  h2 { flex: none; display: flex; align-items: center; gap: 5px; height: 17px; padding-left: 2px; background: #a1a1a1; font-weight: bold; font-size: 12px; color: #111; }
  .vgrip { width: 3px; height: 11px; background: repeating-linear-gradient(#555 0 1px, #a1a1a1 1px 2px); }
  .now { flex: none; display: flex; gap: 5px; padding-top: 4px; }
  .sunken { flex: 1; height: 18px; padding-left: 2px; border: 1px solid #dcdccb; border-top: 2px solid #c5c4b4; border-left: 0; line-height: 13px; }
  .find { width: 109px; height: 19px; display: flex; align-items: center; border: 1px solid #93b4c8; background: var(--green); padding: 0 1px; }
  .find input { flex: 1; width: 40px; }
  .find input::placeholder { color: #a2b3a2; }
  .find .ico { width: 14px; height: 14px; }
  .tools { flex: none; display: flex; align-items: center; height: 26px; padding-right: 4px; }
  .tools-l { display: flex; width: 175px; height: 20px; }
  .tools-l .sep { margin: 2px 3px; }
  .tools-m { display: flex; flex: 1; }

  .split { flex: 1; min-height: 0; display: grid; grid-template-columns: 176px minmax(0, 1fr); gap: 3px; }
  .tree, .list { display: flex; flex-direction: column; min-height: 0; border: 1px solid #45484d; border-bottom-width: 2px; border-top-width: 2px; }
  .tree-head, .tree-foot { flex: none; display: flex; align-items: center; height: 18px; padding-left: 4px; background: #f0f0f0; }
  .tree-head { border-bottom: 1px solid #a9bcc6; }
  .tree-foot { border-top: 1px solid #8db2c4; }
  .tree-foot label { display: flex; align-items: center; white-space: pre; }
  .tree-foot input { appearance: none; width: 12px; height: 12px; margin-right: 3px; border: 1px solid #3a6a96; background: #fff; }
  .tree-foot input:checked { background: #3a6a96; }
  .fold { margin-left: auto; padding-right: 2px; font: bold 20px/14px "Liberation Sans", sans-serif; color: #333; }
  .tree ul { flex: 1; list-style: none; background: var(--green); }
  .tree li { display: flex; align-items: center; height: 14px; }
  .tree li .ico { margin-right: 1px; }
  .tree li:first-child { padding-left: 8px; }
  .minus { width: 8px; height: 8px; margin-right: 5px; border: 1px solid #8a9aa8; background: linear-gradient(#333, #333) center / 4px 1px no-repeat #fff; }
  .picked { background: #ece9d8; padding: 0 4px 0 2px; }
  .child { padding-left: 28px; }
  .twig { width: 9px; height: 7px; margin-bottom: 6px; border-left: 1px dotted #8a9a8a; border-bottom: 1px dotted #8a9a8a; }

  .list-body { flex: 1; min-height: 0; background: linear-gradient(90deg, var(--green) 84px, #9d9d9d 84px 86px, var(--green) 86px); }
  table { width: 100%; table-layout: fixed; border-collapse: collapse; }
  .c-st { width: 20px; }
  .c-nm { width: 66px; }
  .c-on { width: 21px; }
  .c-fr { width: 36px; }
  .c-lk { width: 28px; }
  .c-co { width: 41px; }
  th, td { padding: 0 0 0 3px; text-align: left; white-space: nowrap; font-weight: normal; }
  th { height: 18px; background: linear-gradient(90deg, transparent calc(100% - 1px), #c9c6b6 0) #ece9d8; border-bottom: 2px solid #d6d2c2; }
  td { height: 14px; line-height: 13px; }
  td.en { padding-left: 2px; }
  th:first-child { padding-left: 4px; }
  td:first-child { padding-left: 0; }
  tr.current { background: #f1ede0; }
  td .ico { height: 14px; width: 15px; }
  td.mid .ico { margin: 0 auto; }
  td .chip { display: inline-block; margin-right: 5px; vertical-align: -1px; }
  .sort { float: right; margin: 6px 4px 0 0; border: 4px solid transparent; border-bottom-color: #aca899; border-top: 0; }
  .sb { width: 14px; height: 14px; flex: none; display: flex; align-items: center; justify-content: center; border: 1px solid #b9cbf5; border-radius: 2px; background: linear-gradient(135deg, #dde7fd, #b4c8f7); }
  .hscroll { flex: none; display: flex; height: 14px; background: #fafaf6; }
  .thumb { width: 75px; display: flex; align-items: center; justify-content: center; border: 1px solid #9db5ea; border-radius: 2px; background: linear-gradient(#d3defc, #b5c8f8); }
  .thumb i { width: 8px; height: 6px; background: repeating-linear-gradient(90deg, #8fa8e2 0 1px, #dfe8fd 1px 2px); }
  .fill { flex: 1; }
  .total { flex: none; margin: 6px 0 6px; height: 20px; line-height: 16px; }

  /* 绘图区 */
  .work { min-width: 0; min-height: 0; display: flex; flex-direction: column; padding-left: 4px; background: #676767; }
  .upper { flex: 1; min-height: 0; display: flex; }
  .dock { display: flex; flex-direction: column; flex: none; align-self: flex-start; width: 22px; height: 337px; border: 1px solid #4b4b4b; background: var(--face); }
  .dock.draw { height: 374px; margin-right: 4px; }
  .dock.order { height: 85px; }
  .dock .tool { flex: 1; height: auto; }
  .hgrip { height: 7px; flex: none; border: 2px solid #5d5d5d; background: repeating-linear-gradient(90deg, #444 0 1px, #777 1px 2px); }
  .view { flex: 1; min-width: 0; display: flex; flex-direction: column; border: 1px solid #aaa894; border-right: 0; }
  .model { flex: 1; min-height: 0; display: flex; }
  .drawing { flex: 1; min-width: 0; height: 100%; background: #000; }
  .drawing text { font: 300 20px "Liberation Serif", "Noto Sans CJK SC", serif; }
  .vscroll { width: 15px; display: flex; flex-direction: column; background: #fafaf6; border-right: 1px solid #ebe9d9; }
  .vscroll .thumb { width: 14px; height: 15px; background: linear-gradient(90deg, #d3defc, #b5c8f8); }
  .vscroll .thumb i { background: repeating-linear-gradient(#8fa8e2 0 1px, #dfe8fd 1px 2px); }
  .vscroll .fill { flex: 2; }
  .vscroll .low { flex: 5; }
  .tabs { flex: none; display: flex; height: 14px; background: #ece9d8; }
  .nav { display: flex; width: 50px; }
  .nav button { flex: 1; border-right: 1px solid #c9c6b6; color: #a5a296; font: 9px/13px "DejaVu Sans", sans-serif; }
  .tab { width: 41px; line-height: 13px; background: linear-gradient(110deg, transparent 92%, #777 92% 95%, transparent 95%); }
  .tab.on { background: #000; color: #fff; clip-path: polygon(0 0, 100% 0, 92% 100%, 12% 100%); font-weight: bold; }
  .rest { flex: 1; }
  .short { width: 172px; }
  .short .thumb { width: 14px; }
  .side { flex: none; padding-left: 6px; }
  .edge { flex: none; display: flex; flex-direction: column; width: 7px; height: 333px; margin: 0 0 0 2px; padding-top: 6px; overflow: hidden; background: var(--face); border-top: 5px solid #555; }
  .cmd { flex: none; display: flex; height: 52px; margin-top: 4px; }
  .cmd-grip { width: 14px; background: linear-gradient(#666, #666) 2px 3px / 10px 2px no-repeat #a1a1a1; }
  .cmd-body { flex: 1; background: var(--green); font-family: "Liberation Mono", "Noto Sans CJK SC", monospace; font-size: 12px; line-height: 13px; }
  .cmd-body p { font-size: 12px; line-height: 14px; }
  .cmd-body label { display: flex; margin-top: 8px; border-top: 1px solid #b3c4b0; line-height: 15px; }
  .cmd-body input { flex: 1; }

  /* 状态栏 */
  footer { flex: none; display: flex; align-items: flex-start; height: 16px; overflow: hidden; background: linear-gradient(#999, #6c6c6c); border-top: 1px solid #444; color: #111; line-height: 18px; }
  .coords { width: 122px; padding-left: 6px; white-space: nowrap; }
  .xyz { width: 164px; line-height: 20px; white-space: nowrap; }
  .toggles { display: flex; gap: 1px; background: #555; }
  .toggles button { height: 16px; padding: 0; width: 26px; line-height: 18px; background: linear-gradient(#b0b0b0, #8b8b8b); }
  .toggles button:nth-child(5), .toggles button:nth-child(6) { width: 47px; padding: 0; }
  .toggles button:nth-child(8) { width: 20px; }
  .toggles button:nth-child(10) { width: 15px; }
  .toggles .on { background: linear-gradient(#b9e0ea, #86bccc); }
  .tray { margin-left: auto; display: flex; height: 16px; }
  .tray button { border-left: 1px solid #666; background: linear-gradient(#b0b0b0, #8b8b8b); height: 18px; }
  .txt { display: flex; align-items: center; padding: 0 2px; }
  .txt.scale { width: 47px; gap: 1px; }
  .txt.ws { width: 47px; overflow: hidden; padding: 0 0 0 2px; }
  .hole { width: 14px; }
  .hole.slim { width: 5px; }

  /* 气泡 */
  .balloon { position: absolute; right: -12px; bottom: 22px; width: 80px; height: 65px; padding: 5px 0 0 12px; overflow: hidden; white-space: nowrap; background: #ffffe1; border: 1px solid #222; border-radius: 11px; }
  .balloon h3 { display: flex; align-items: center; gap: 8px; margin-left: -4px; font-weight: bold; height: 17px; }
  .balloon svg { width: 16px; height: 16px; flex: none; }
  .balloon p { line-height: 18px; }
  .balloon a { color: #0000ee; line-height: 15px; }

  /* 水印 */
  .mark { position: absolute; right: 55px; bottom: 20px; width: 177px; color: #fff; opacity: .75; pointer-events: none; }
  .brand { display: flex; align-items: flex-end; height: 54px; margin-bottom: 4px; }
  .brand span { font: bold 37px/30px "Liberation Sans", sans-serif; }
  .brand svg { width: 54px; height: 54px; flex: none; }
  .brand text { font: bold 22px "Liberation Sans", sans-serif; fill: #9cb3a0; }
  .brand .jy { font: bold 27px/32px "Noto Sans CJK SC", sans-serif; white-space: nowrap; }
  .url { font: 20px/24px "Noto Sans", sans-serif; white-space: nowrap; }
</style>
